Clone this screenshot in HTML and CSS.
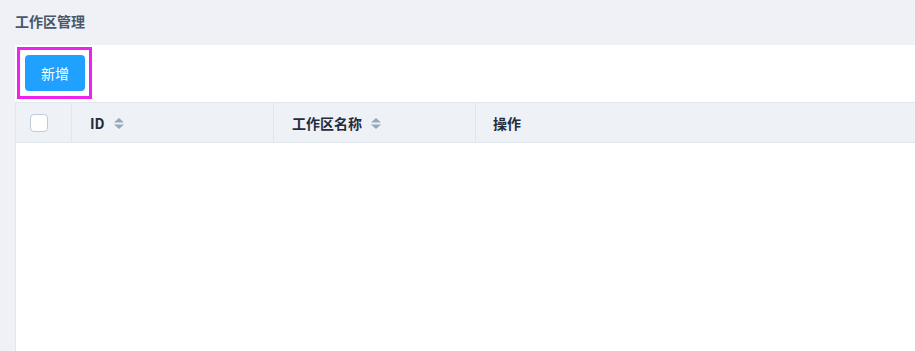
FILE: index.html
```html
<!DOCTYPE html>
<html lang="zh">
<head>
<meta charset="utf-8">
<title>工作区管理</title>
<link rel="stylesheet" href="styles.css">
</head>
<body>
<div class="page-title">工作区管理</div>
<div class="panel">
  <div class="toolbar"><button class="btn-primary">新增</button></div>
  <div class="table">
    <div class="thead">
      <div class="th th-check"><span class="checkbox"></span></div>
      <div class="th">ID<svg class="sort" width="10" height="11" viewBox="0 0 10 11"><path d="M5 0 L10 4.5 L0 4.5 Z" fill="#97a8be"/><path d="M0 6.5 L10 6.5 L5 11 Z" fill="#97a8be"/></svg></div>
      <div class="th">工作区名称<svg class="sort" width="10" height="11" viewBox="0 0 10 11"><path d="M5 0 L10 4.5 L0 4.5 Z" fill="#97a8be"/><path d="M0 6.5 L10 6.5 L5 11 Z" fill="#97a8be"/></svg></div>
      <div class="th">操作</div>
    </div>
    <div class="tbody"></div>
  </div>
</div>
</body>
</html>
```
FILE: styles.css
```css
html, body {
  margin: 0;
  padding: 0;
  background: #eff1f6;
  font-family: "Noto Sans CJK SC", "Noto Sans", "Liberation Sans", sans-serif;
  overflow: hidden;
}
.page-title {
  height: 45px;
  box-sizing: border-box;
  padding: 11px 0 0 15px;
  font-size: 14px;
  line-height: 20px;
  font-weight: bold;
  color: #48576a;
}
.panel {
  margin-left: 15px;
  background: #fff;
  height: 306px;
  overflow: hidden;
}
.toolbar {
  display: inline-block;
  margin: 2px 0 2px 2px;
  border: 3px solid #ee22ee;
  padding: 5px 4px 5px 5px;
  vertical-align: top;
}
.btn-primary {
  display: block;
  width: 60px;
  height: 36px;
  border: none;
  border-radius: 4px;
  background: #20a0ff;
  color: #fff;
  font-family: inherit;
  font-size: 14px;
  padding: 0;
}
.table {
  margin-top: 1px;
  border-left: 1px solid #dfe6ec;
  border-top: 1px solid #dfe6ec;
  height: 260px;
}
.thead {
  display: grid;
  grid-template-columns: 56px 202px 202px 1fr;
  height: 40px;
  background: #eef1f6;
  border-bottom: 1px solid #dfe6ec;
  box-sizing: border-box;
}
.th {
  display: flex;
  align-items: center;
  box-sizing: border-box;
  border-right: 1px solid #dfe6ec;
  padding-left: 18px;
  font-size: 14px;
  font-weight: bold;
  color: #1f2d3d;
}
.th:last-child { border-right: none; padding-left: 17px; }
.th-check { padding-left: 14px; }
.checkbox {
  width: 18px;
  height: 18px;
  box-sizing: border-box;
  border: 1px solid #bfcbd9;
  border-radius: 4px;
  background: #fff;
}
.sort {
  margin-left: 9px;
  margin-top: 1px;
}
```
